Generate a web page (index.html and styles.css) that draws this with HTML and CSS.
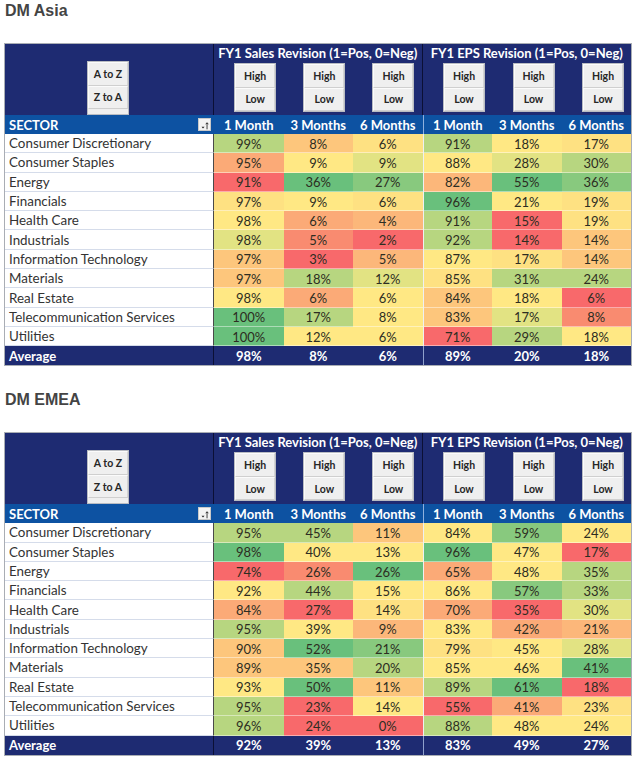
FILE: index.html
```html
<!DOCTYPE html>
<html>
<head>
<meta charset="utf-8">
<link rel="stylesheet" href="styles.css">
</head>
<body>
<section class="block">
  <h2 class="title">DM Asia</h2>
  <div class="tbl">
    <div class="h-sector">
      <div class="stack"><div class="btn">A to Z</div><div class="btn">Z to A</div></div>
    </div>
    <div class="h-group g1">
      <div class="gtitle">FY1 Sales Revision (1=Pos, 0=Neg)</div>
      <div class="gbtns">
        <div class="stack"><div class="btn">High</div><div class="btn">Low</div></div>
        <div class="stack"><div class="btn">High</div><div class="btn">Low</div></div>
        <div class="stack"><div class="btn">High</div><div class="btn">Low</div></div>
      </div>
    </div>
    <div class="h-group">
      <div class="gtitle">FY1 EPS Revision (1=Pos, 0=Neg)</div>
      <div class="gbtns">
        <div class="stack"><div class="btn">High</div><div class="btn">Low</div></div>
        <div class="stack"><div class="btn">High</div><div class="btn">Low</div></div>
        <div class="stack"><div class="btn">High</div><div class="btn">Low</div></div>
      </div>
    </div>

    <div class="ch-sector">SECTOR<span class="sort"><svg width="13" height="13" viewBox="0 0 13 13"><path d="M3 8 L6.5 8 L4.75 10 Z" fill="#222"/><path d="M9.5 11 V3.5 M8 5 L9.5 3.2 L11 5" stroke="#222" stroke-width="1" fill="none"/></svg></span></div>
    <div class="ch">1 Month</div><div class="ch">3 Months</div><div class="ch">6 Months</div>
    <div class="ch d">1 Month</div><div class="ch">3 Months</div><div class="ch">6 Months</div>

    <div class="sec">Consumer Discretionary</div><div class="v lg">99%</div><div class="v lo">8%</div><div class="v yo">6%</div><div class="v d lg">91%</div><div class="v y">18%</div><div class="v yo">17%</div>
    <div class="sec">Consumer Staples</div><div class="v o">95%</div><div class="v y">9%</div><div class="v yg">9%</div><div class="v d y">88%</div><div class="v yg">28%</div><div class="v lg">30%</div>
    <div class="sec">Energy</div><div class="v r">91%</div><div class="v g">36%</div><div class="v mg">27%</div><div class="v d o2">82%</div><div class="v g">55%</div><div class="v mg">36%</div>
    <div class="sec">Financials</div><div class="v yo">97%</div><div class="v y">9%</div><div class="v yo">6%</div><div class="v d g">96%</div><div class="v y">21%</div><div class="v yo">19%</div>
    <div class="sec">Health Care</div><div class="v y">98%</div><div class="v o">6%</div><div class="v o2">4%</div><div class="v d lg">91%</div><div class="v r">15%</div><div class="v yo">19%</div>
    <div class="sec">Industrials</div><div class="v yg">98%</div><div class="v ro">5%</div><div class="v r">2%</div><div class="v d lg">92%</div><div class="v r">14%</div><div class="v lo">14%</div>
    <div class="sec">Information Technology</div><div class="v lo">97%</div><div class="v r">3%</div><div class="v o2">5%</div><div class="v d y">87%</div><div class="v yo">17%</div><div class="v lo">14%</div>
    <div class="sec">Materials</div><div class="v lo">97%</div><div class="v lg">18%</div><div class="v yg">12%</div><div class="v d yo">85%</div><div class="v lg">31%</div><div class="v lg">24%</div>
    <div class="sec">Real Estate</div><div class="v y">98%</div><div class="v o">6%</div><div class="v y">6%</div><div class="v d lo">84%</div><div class="v y">18%</div><div class="v r">6%</div>
    <div class="sec">Telecommunication Services</div><div class="v g">100%</div><div class="v lg">17%</div><div class="v y">8%</div><div class="v d lo">83%</div><div class="v yg">17%</div><div class="v ro">8%</div>
    <div class="sec">Utilities</div><div class="v g">100%</div><div class="v y">12%</div><div class="v y">6%</div><div class="v d r">71%</div><div class="v lg">29%</div><div class="v y">18%</div>

    <div class="avg-label">Average</div><div class="avg">98%</div><div class="avg">8%</div><div class="avg">6%</div><div class="avg d">89%</div><div class="avg">20%</div><div class="avg">18%</div>
  </div>
</section>

<section class="block second">
  <h2 class="title">DM EMEA</h2>
  <div class="tbl">
    <div class="h-sector">
      <div class="stack"><div class="btn">A to Z</div><div class="btn">Z to A</div></div>
    </div>
    <div class="h-group g1">
      <div class="gtitle">FY1 Sales Revision (1=Pos, 0=Neg)</div>
      <div class="gbtns">
        <div class="stack"><div class="btn">High</div><div class="btn">Low</div></div>
        <div class="stack"><div class="btn">High</div><div class="btn">Low</div></div>
        <div class="stack"><div class="btn">High</div><div class="btn">Low</div></div>
      </div>
    </div>
    <div class="h-group">
      <div class="gtitle">FY1 EPS Revision (1=Pos, 0=Neg)</div>
      <div class="gbtns">
        <div class="stack"><div class="btn">High</div><div class="btn">Low</div></div>
        <div class="stack"><div class="btn">High</div><div class="btn">Low</div></div>
        <div class="stack"><div class="btn">High</div><div class="btn">Low</div></div>
      </div>
    </div>

    <div class="ch-sector">SECTOR<span class="sort"><svg width="13" height="13" viewBox="0 0 13 13"><path d="M3 8 L6.5 8 L4.75 10 Z" fill="#222"/><path d="M9.5 11 V3.5 M8 5 L9.5 3.2 L11 5" stroke="#222" stroke-width="1" fill="none"/></svg></span></div>
    <div class="ch">1 Month</div><div class="ch">3 Months</div><div class="ch">6 Months</div>
    <div class="ch d">1 Month</div><div class="ch">3 Months</div><div class="ch">6 Months</div>

    <div class="sec">Consumer Discretionary</div><div class="v lg">95%</div><div class="v lg">45%</div><div class="v lo">11%</div><div class="v d y">84%</div><div class="v mg">59%</div><div class="v y">24%</div>
    <div class="sec">Consumer Staples</div><div class="v g">98%</div><div class="v y">40%</div><div class="v y">13%</div><div class="v d g">96%</div><div class="v y">47%</div><div class="v r">17%</div>
    <div class="sec">Energy</div><div class="v r">74%</div><div class="v ro">26%</div><div class="v g">26%</div><div class="v d o">65%</div><div class="v y">48%</div><div class="v lg">35%</div>
    <div class="sec">Financials</div><div class="v y">92%</div><div class="v lg">44%</div><div class="v y">15%</div><div class="v d y">86%</div><div class="v mg">57%</div><div class="v lg">33%</div>
    <div class="sec">Health Care</div><div class="v o">84%</div><div class="v r">27%</div><div class="v yo">14%</div><div class="v d o">70%</div><div class="v r">35%</div><div class="v yg">30%</div>
    <div class="sec">Industrials</div><div class="v lg">95%</div><div class="v y">39%</div><div class="v o2">9%</div><div class="v d y">83%</div><div class="v o">42%</div><div class="v o2">21%</div>
    <div class="sec">Information Technology</div><div class="v lo">90%</div><div class="v g">52%</div><div class="v mg">21%</div><div class="v d yo">79%</div><div class="v y">45%</div><div class="v yg">28%</div>
    <div class="sec">Materials</div><div class="v lo">89%</div><div class="v lo">35%</div><div class="v lg">20%</div><div class="v d y">85%</div><div class="v y">46%</div><div class="v g">41%</div>
    <div class="sec">Real Estate</div><div class="v y">93%</div><div class="v g">50%</div><div class="v lo">11%</div><div class="v d lg">89%</div><div class="v g">61%</div><div class="v r">18%</div>
    <div class="sec">Telecommunication Services</div><div class="v lg">95%</div><div class="v r">23%</div><div class="v y">14%</div><div class="v d r">55%</div><div class="v o">41%</div><div class="v yo">23%</div>
    <div class="sec">Utilities</div><div class="v lg">96%</div><div class="v r">24%</div><div class="v r">0%</div><div class="v d lg">88%</div><div class="v y">48%</div><div class="v y">24%</div>

    <div class="avg-label">Average</div><div class="avg">92%</div><div class="avg">39%</div><div class="avg">13%</div><div class="avg d">83%</div><div class="avg">49%</div><div class="avg">27%</div>
  </div>
</section>
</body>
</html>
```
FILE: styles.css
```css
* { box-sizing: border-box; }
html, body { margin: 0; padding: 0; background: #fff; }
body { font-family: Lato, "Open Sans", sans-serif; }

.block { padding-top: 2px; }
.block.second { margin-top: 23px; }

.title {
  margin: 0 0 23px 5px;
  font-family: "Liberation Sans", Arial, sans-serif;
  font-weight: bold;
  font-size: 16px;
  line-height: 18px;
  color: #444;
}

.tbl {
  display: grid;
  grid-template-columns: 209px repeat(6, 69.5px);
  grid-template-rows: 71px 19px repeat(11, 19.3px) 19px;
  width: max-content;
  margin-left: 4px;
  border: 1px solid #a9adb4;
  font-size: 13px;
}

/* top header */
.h-sector {
  background: #1e2b72;
  border-right: 1px solid #0b1035;
  display: flex;
  justify-content: center;
  padding-top: 17px;
  padding-right: 2px;
}
.h-group {
  grid-column: span 3;
  background: #1e2b72;
  display: flex;
  flex-direction: column;
}
.h-group.g1 { border-right: 1px solid #0b1035; }
.gtitle {
  height: 18px;
  line-height: 18px;
  color: #fff;
  font-weight: bold;
  font-size: 13px;
  text-align: center;
  white-space: nowrap;
}
.gbtns {
  display: grid;
  grid-template-columns: repeat(3, 1fr);
  padding-top: 1px;
}
.gbtns .stack { justify-self: end; margin-right: 7px; }

.stack {
  width: 42px;
  display: flex;
  flex-direction: column;
  border: 1px solid #b9bcc2;
  background: #efefef;
}
.btn {
  height: 23.5px;
  display: flex;
  align-items: center;
  justify-content: center;
  font-size: 10.5px;
  font-weight: bold;
  color: #262626;
  border: 1px solid #fbfbfb;
  border-right-color: #d4d4d4;
  border-bottom-color: #cfcfcf;
}

/* column header row */
.ch-sector, .ch {
  background: #0d52a2;
  color: #fff;
  font-weight: bold;
  font-size: 13px;
  display: flex;
  align-items: center;
}
.ch-sector {
  padding-left: 4px;
  justify-content: space-between;
  padding-right: 3px;
}
.ch { justify-content: center; }
.ch.d { border-left: 1px solid #8fb0dd; }
.sort {
  width: 13px;
  height: 13px;
  background: #f4f4f4;
  border: 1px solid #c9c9c9;
  display: flex;
}

/* body rows */
.sec {
  background: #fff;
  color: #333;
  font-size: 13.4px;
  padding-left: 4px;
  display: flex;
  align-items: center;
  border-bottom: 1px solid #d5dcea;
  border-right: 1px solid #4a4a4a;
  white-space: nowrap;
}
.v {
  display: flex;
  align-items: center;
  justify-content: center;
  color: #2d2d22;
  box-shadow: inset 0 -1px 0 rgba(255,255,255,0.45);
}
.v.d { border-left: 1px solid #eef0f3; }

.r  { background: #f8696b; }
.ro { background: #f98b70; }
.o  { background: #fbaa77; }
.o2 { background: #fcb77a; }
.lo { background: #fdc67c; }
.yo { background: #fee182; }
.y  { background: #ffe884; }
.yg { background: #e2e383; }
.lg { background: #b7d680; }
.mg { background: #88c97e; }
.g  { background: #69c07c; }

/* average row */
.avg-label, .avg {
  background: #1e2b72;
  color: #fff;
  font-weight: bold;
  display: flex;
  align-items: center;
}
.avg-label { padding-left: 4px; border-right: 1px solid #0b1035; }
.avg { justify-content: center; }
.avg.d { border-left: 1px solid #8fa0cc; }
```
